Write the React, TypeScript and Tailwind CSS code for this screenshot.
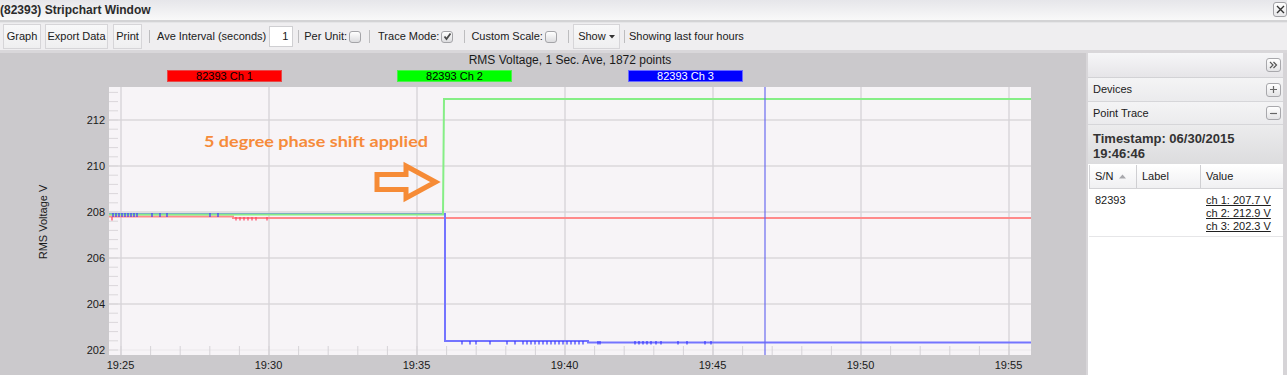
import React from "react";

// chart scale: minutes after 19:25 -> x, volts -> y (page pixels)
const X = (m: number) => 121 + m * 29.6;
const Y = (v: number) => 350 - (v - 202) * 23;

const blueSpikesLeft = [113, 116, 119, 122, 125, 128, 131, 134, 137, 152, 160, 167, 210, 218];
const redSpikes = [112, 236, 240, 244, 248, 252, 256, 267];
const blueSpikesRight = [
  462, 470, 476, 490, 507, 515, 523, 527, 531, 535, 539, 543, 547, 551, 555, 559, 563, 567, 571,
  575, 579, 583, 598, 600, 635, 639, 643, 647, 651, 656, 661, 678, 687, 705, 711,
];

function Chart() {
  const majors = [204, 206, 208, 210, 212];
  const yTicks: number[] = [];
  for (let k = 0; k < 30; k++) {
    const y = 350 - k * 9.2;
    if (y > 88) yTicks.push(y);
  }
  const xTicks: number[] = [];
  for (let m = 0; m <= 30; m++) xTicks.push(X(m));
  const xLabels = ["19:25", "19:30", "19:35", "19:40", "19:45", "19:50", "19:55"];

  return (
    <svg width={1086} height={293} viewBox="0 82 1086 293" className="block">
      <rect x={109} y={87} width={922} height={268} fill="#f7f4f7" />
      {/* horizontal grid */}
      {majors.map((v) => (
        <line key={v} x1={109} x2={1031} y1={Y(v)} y2={Y(v)} stroke="#e2dfe2" strokeWidth={2} />
      ))}
      <line x1={109} x2={1031} y1={350} y2={350} stroke="#ebe8eb" strokeWidth={1} />
      {/* left minor ticks */}
      {yTicks.map((y, i) => (
        <line key={i} x1={109} x2={118} y1={y} y2={y} stroke="#dad7da" strokeWidth={1} />
      ))}
      {/* vertical grid */}
      {[0, 5, 10, 15, 20, 25, 30].map((m) => (
        <line key={m} x1={X(m)} x2={X(m)} y1={87} y2={355} stroke="#d6d3d7" strokeWidth={1.3} />
      ))}
      {/* bottom minor ticks */}
      {xTicks.map((x, i) => (
        <line key={i} x1={x} x2={x} y1={346} y2={355} stroke="#d6d3d7" strokeWidth={1} />
      ))}

      {/* red */}
      <path d="M109 216.5 H233 V218 H1031" fill="none" stroke="#ff8a8a" strokeWidth={2} />
      {redSpikes.map((x) => (
        <line key={x} x1={x} x2={x} y1={217} y2={220.5} stroke="#ff4060" strokeWidth={1.2} />
      ))}
      {/* blue */}
      <path d="M109 214 H445 V341 H588 V342.5 H1031" fill="none" stroke="#7474ff" strokeWidth={2} />
      {/* green */}
      <path d="M109 214.5 H443 L444 99 H1031" fill="none" stroke="#86ee86" strokeWidth={2} />
      {blueSpikesLeft.map((x) => (
        <line key={x} x1={x} x2={x} y1={213} y2={217} stroke="#3a3aff" strokeWidth={1.2} />
      ))}
      {blueSpikesRight.map((x) => (
        <line key={x} x1={x} x2={x} y1={341} y2={344.5} stroke="#3a3aff" strokeWidth={1.2} />
      ))}

      {/* cursor */}
      <line x1={765} x2={765} y1={87} y2={355} stroke="#6a6af0" strokeWidth={1.2} />

      {/* annotation */}
      <text
        x={204}
        y={147}
        fontFamily="Lato, 'Open Sans', sans-serif"
        fontWeight={700}
        fontSize={16}
        fill="#f68b3a"
        textLength={224}
        lengthAdjust="spacingAndGlyphs"
      >
        5 degree phase shift applied
      </text>
      <polygon
        points="377,174.5 406,174.5 406,166 435.5,182 406,198 406,189.5 377,189.5"
        fill="none"
        stroke="#f68b36"
        strokeWidth={5}
      />

      {/* axis labels */}
      <g fontFamily="'Liberation Sans', Arial, sans-serif" fontSize={11} fill="#1a1a1a">
        {[202, 204, 206, 208, 210, 212].map((v) => (
          <text key={v} x={105} y={Y(v) + 4} textAnchor="end">
            {v}
          </text>
        ))}
        {xLabels.map((l, i) => (
          <text key={l} x={X(i * 5) - 0.5} y={369} textAnchor="middle">
            {l}
          </text>
        ))}
        <text x={47} y={222} textAnchor="middle" transform="rotate(-90 47 222)">
          RMS Voltage V
        </text>
      </g>
    </svg>
  );
}

function Sep({ ml }: { ml: string }) {
  return <div className={`${ml} h-[13px] w-px bg-[#bdbdbf]`} />;
}

function Check({ checked, ml }: { checked?: boolean; ml: string }) {
  return (
    <div
      className={`${ml} flex h-[12px] w-[12px] items-center justify-center rounded-[3px] border border-[#a4a4a8] bg-linear-to-b from-[#ffffff] to-[#dcdcdf]`}
    >
      {checked && (
        <svg width="9" height="9" viewBox="0 0 9 9">
          <path d="M1.5 4.5 L3.5 7 L7.5 1.5" fill="none" stroke="#4a4a4a" strokeWidth={1.8} />
        </svg>
      )}
    </div>
  );
}

function ToolButton({ w, ml, children }: { w: string; ml: string; children: React.ReactNode }) {
  return (
    <div
      className={`${ml} ${w} flex h-[25px] items-center justify-center border border-[#d6d5d8] bg-linear-to-b from-[#f8f8f9] to-[#efeff0]`}
    >
      {children}
    </div>
  );
}

function SmallBtn({ children }: { children: React.ReactNode }) {
  return (
    <div className="flex h-[14px] w-[15px] items-center justify-center rounded-[3px] border border-[#a8a8ac] bg-linear-to-b from-[#ffffff] to-[#e4e4e6]">
      {children}
    </div>
  );
}

export default function App() {
  return (
    <div className="h-[375px] w-[1287px] overflow-hidden bg-[#cbc9cc] font-['Liberation_Sans',Arial,sans-serif] text-[11px] text-[#202020]">
      {/* title bar */}
      <div className="flex h-[20px] bg-linear-to-b from-[#e6e6ea] to-[#f9f9f9]">
        <span className="text-[12px] font-bold leading-[20px] text-[#2b2b2b]">(82393) Stripchart Window</span>
        <div className="ml-auto mt-[2px] flex h-[15px] w-[14px] items-center justify-center rounded-[3px] border border-[#a2a2a6] bg-linear-to-b from-[#ffffff] to-[#e8e8ea]">
          <svg width="9" height="9" viewBox="0 0 9 9">
            <path d="M1 1 L8 8 M8 1 L1 8" stroke="#333" strokeWidth={1.4} />
          </svg>
        </div>
      </div>
      <div className="h-[2px] bg-[#d3d3d5]" />

      {/* toolbar */}
      <div className="flex h-[28px] items-center border-t border-[#e5e5e7] bg-[#efeef0]">
        <ToolButton ml="ml-[3px]" w="w-[38px]">Graph</ToolButton>
        <ToolButton ml="ml-[4px]" w="w-[63px]">Export Data</ToolButton>
        <ToolButton ml="ml-[5px]" w="w-[29px]">Print</ToolButton>
        <Sep ml="ml-[7px]" />
        <span className="ml-[7px]">Ave Interval (seconds)</span>
        <div className="ml-[3px] flex h-[21px] w-[24px] items-center justify-end border border-[#cfcfd2] bg-white pr-[4px]">
          1
        </div>
        <Sep ml="ml-[5px]" />
        <span className="ml-[5px]">Per Unit:</span>
        <Check ml="ml-[2px]" />
        <Sep ml="ml-[8px]" />
        <span className="ml-[8px]">Trace Mode:</span>
        <Check ml="ml-[2px]" checked />
        <Sep ml="ml-[11px]" />
        <span className="ml-[6px]">Custom Scale:</span>
        <Check ml="ml-[2px]" />
        <Sep ml="ml-[11px]" />
        <div className="ml-[4px] flex h-[25px] w-[47px] items-center justify-center gap-[3px] border border-[#d6d5d8] bg-linear-to-b from-[#f8f8f9] to-[#efeff0]">
          <span>Show</span>
          <svg width="6" height="4" viewBox="0 0 6 4">
            <path d="M0 0 H6 L3 3.5 Z" fill="#333" />
          </svg>
        </div>
        <Sep ml="ml-[4px]" />
        <span className="ml-[4px]">Showing last four hours</span>
      </div>

      {/* main */}
      <div className="flex h-[325px] border-t-[3px] border-[#d9d7da]">
        <div className="flex w-[1086px] flex-col bg-[#cbc9cc]">
          <div className="ml-[109px] h-[15px] w-[922px] text-center text-[12px] leading-[15px] text-[#1a1a1a]">
            RMS Voltage, 1 Sec. Ave, 1872 points
          </div>
          <div className="mt-[2px] flex h-[12px] text-[11px] leading-[10px]">
            <div className="ml-[167px] w-[115px] border border-[#e84848] bg-[#ff0000] text-center text-black">
              82393 Ch 1
            </div>
            <div className="ml-[115px] w-[115px] border border-[#4cf04c] bg-[#00ff00] text-center text-black">
              82393 Ch 2
            </div>
            <div className="ml-[116px] w-[115px] border border-[#6a6aff] bg-[#0000ff] text-center text-white">
              82393 Ch 3
            </div>
          </div>
          <Chart />
        </div>
        <div className="w-[2px] bg-[#d8d6d9]" />

        {/* right panel */}
        <div className="flex w-[195px] flex-col bg-white">
          <div className="flex h-[25px] items-center justify-end border-b border-[#d2d2d5] bg-linear-to-b from-[#f6f6f8] to-[#e6e5e8] pr-[2px]">
            <SmallBtn>
              <svg width="9" height="8" viewBox="0 0 9 8">
                <path d="M1 1 L4 4 L1 7 M4.5 1 L7.5 4 L4.5 7" fill="none" stroke="#555" strokeWidth={1.2} />
              </svg>
            </SmallBtn>
          </div>
          <div className="flex h-[24px] items-center justify-between border-b border-[#d6d6d9] bg-linear-to-b from-[#f4f4f5] to-[#ebebed] pl-[5px] pr-[2px]">
            <span>Devices</span>
            <SmallBtn>
              <svg width="9" height="9" viewBox="0 0 9 9">
                <path d="M4.5 1 V8 M1 4.5 H8" stroke="#666" strokeWidth={1.2} />
              </svg>
            </SmallBtn>
          </div>
          <div className="flex h-[23px] items-center justify-between border-b border-[#d6d6d9] bg-linear-to-b from-[#f4f4f5] to-[#ebebed] pl-[5px] pr-[2px]">
            <span>Point Trace</span>
            <SmallBtn>
              <svg width="9" height="9" viewBox="0 0 9 9">
                <path d="M1 4.5 H8" stroke="#666" strokeWidth={1.2} />
              </svg>
            </SmallBtn>
          </div>
          <div className="h-[39px] bg-linear-to-b from-[#ececed] to-[#dcdcde] pl-[5px] pt-[6px] text-[13px] font-bold leading-[15px] text-[#333]">
            <div>Timestamp: 06/30/2015</div>
            <div>19:46:46</div>
          </div>

          {/* table */}
          <div className="ml-[1px] mt-[1px] flex h-[24px] items-center border-b border-l border-[#d3d3d6] bg-linear-to-b from-[#ffffff] to-[#f0f0f2]">
            <div className="flex h-full w-[47px] items-center gap-[6px] border-r border-[#cfcfd2] pl-[5px]">
              <span>S/N</span>
              <svg width="7" height="5" viewBox="0 0 7 5">
                <path d="M0 4.5 H7 L3.5 0.5 Z" fill="#a8a8ac" />
              </svg>
            </div>
            <div className="flex h-full w-[64px] items-center border-r border-[#cfcfd2] pl-[5px]">Label</div>
            <div className="pl-[5px]">Value</div>
          </div>
          <div className="ml-[1px] flex border-b border-[#e6e6e8] pb-[3px] pt-[5px] leading-[13px]">
            <div className="w-[47px] pl-[6px]">82393</div>
            <div className="w-[64px]" />
            <div className="pl-[6px] underline">
              <div>ch 1: 207.7 V</div>
              <div>ch 2: 212.9 V</div>
              <div>ch 3: 202.3 V</div>
            </div>
          </div>
        </div>
        <div className="w-[4px] bg-[#d6d4d7]" />
      </div>
    </div>
  );
}
